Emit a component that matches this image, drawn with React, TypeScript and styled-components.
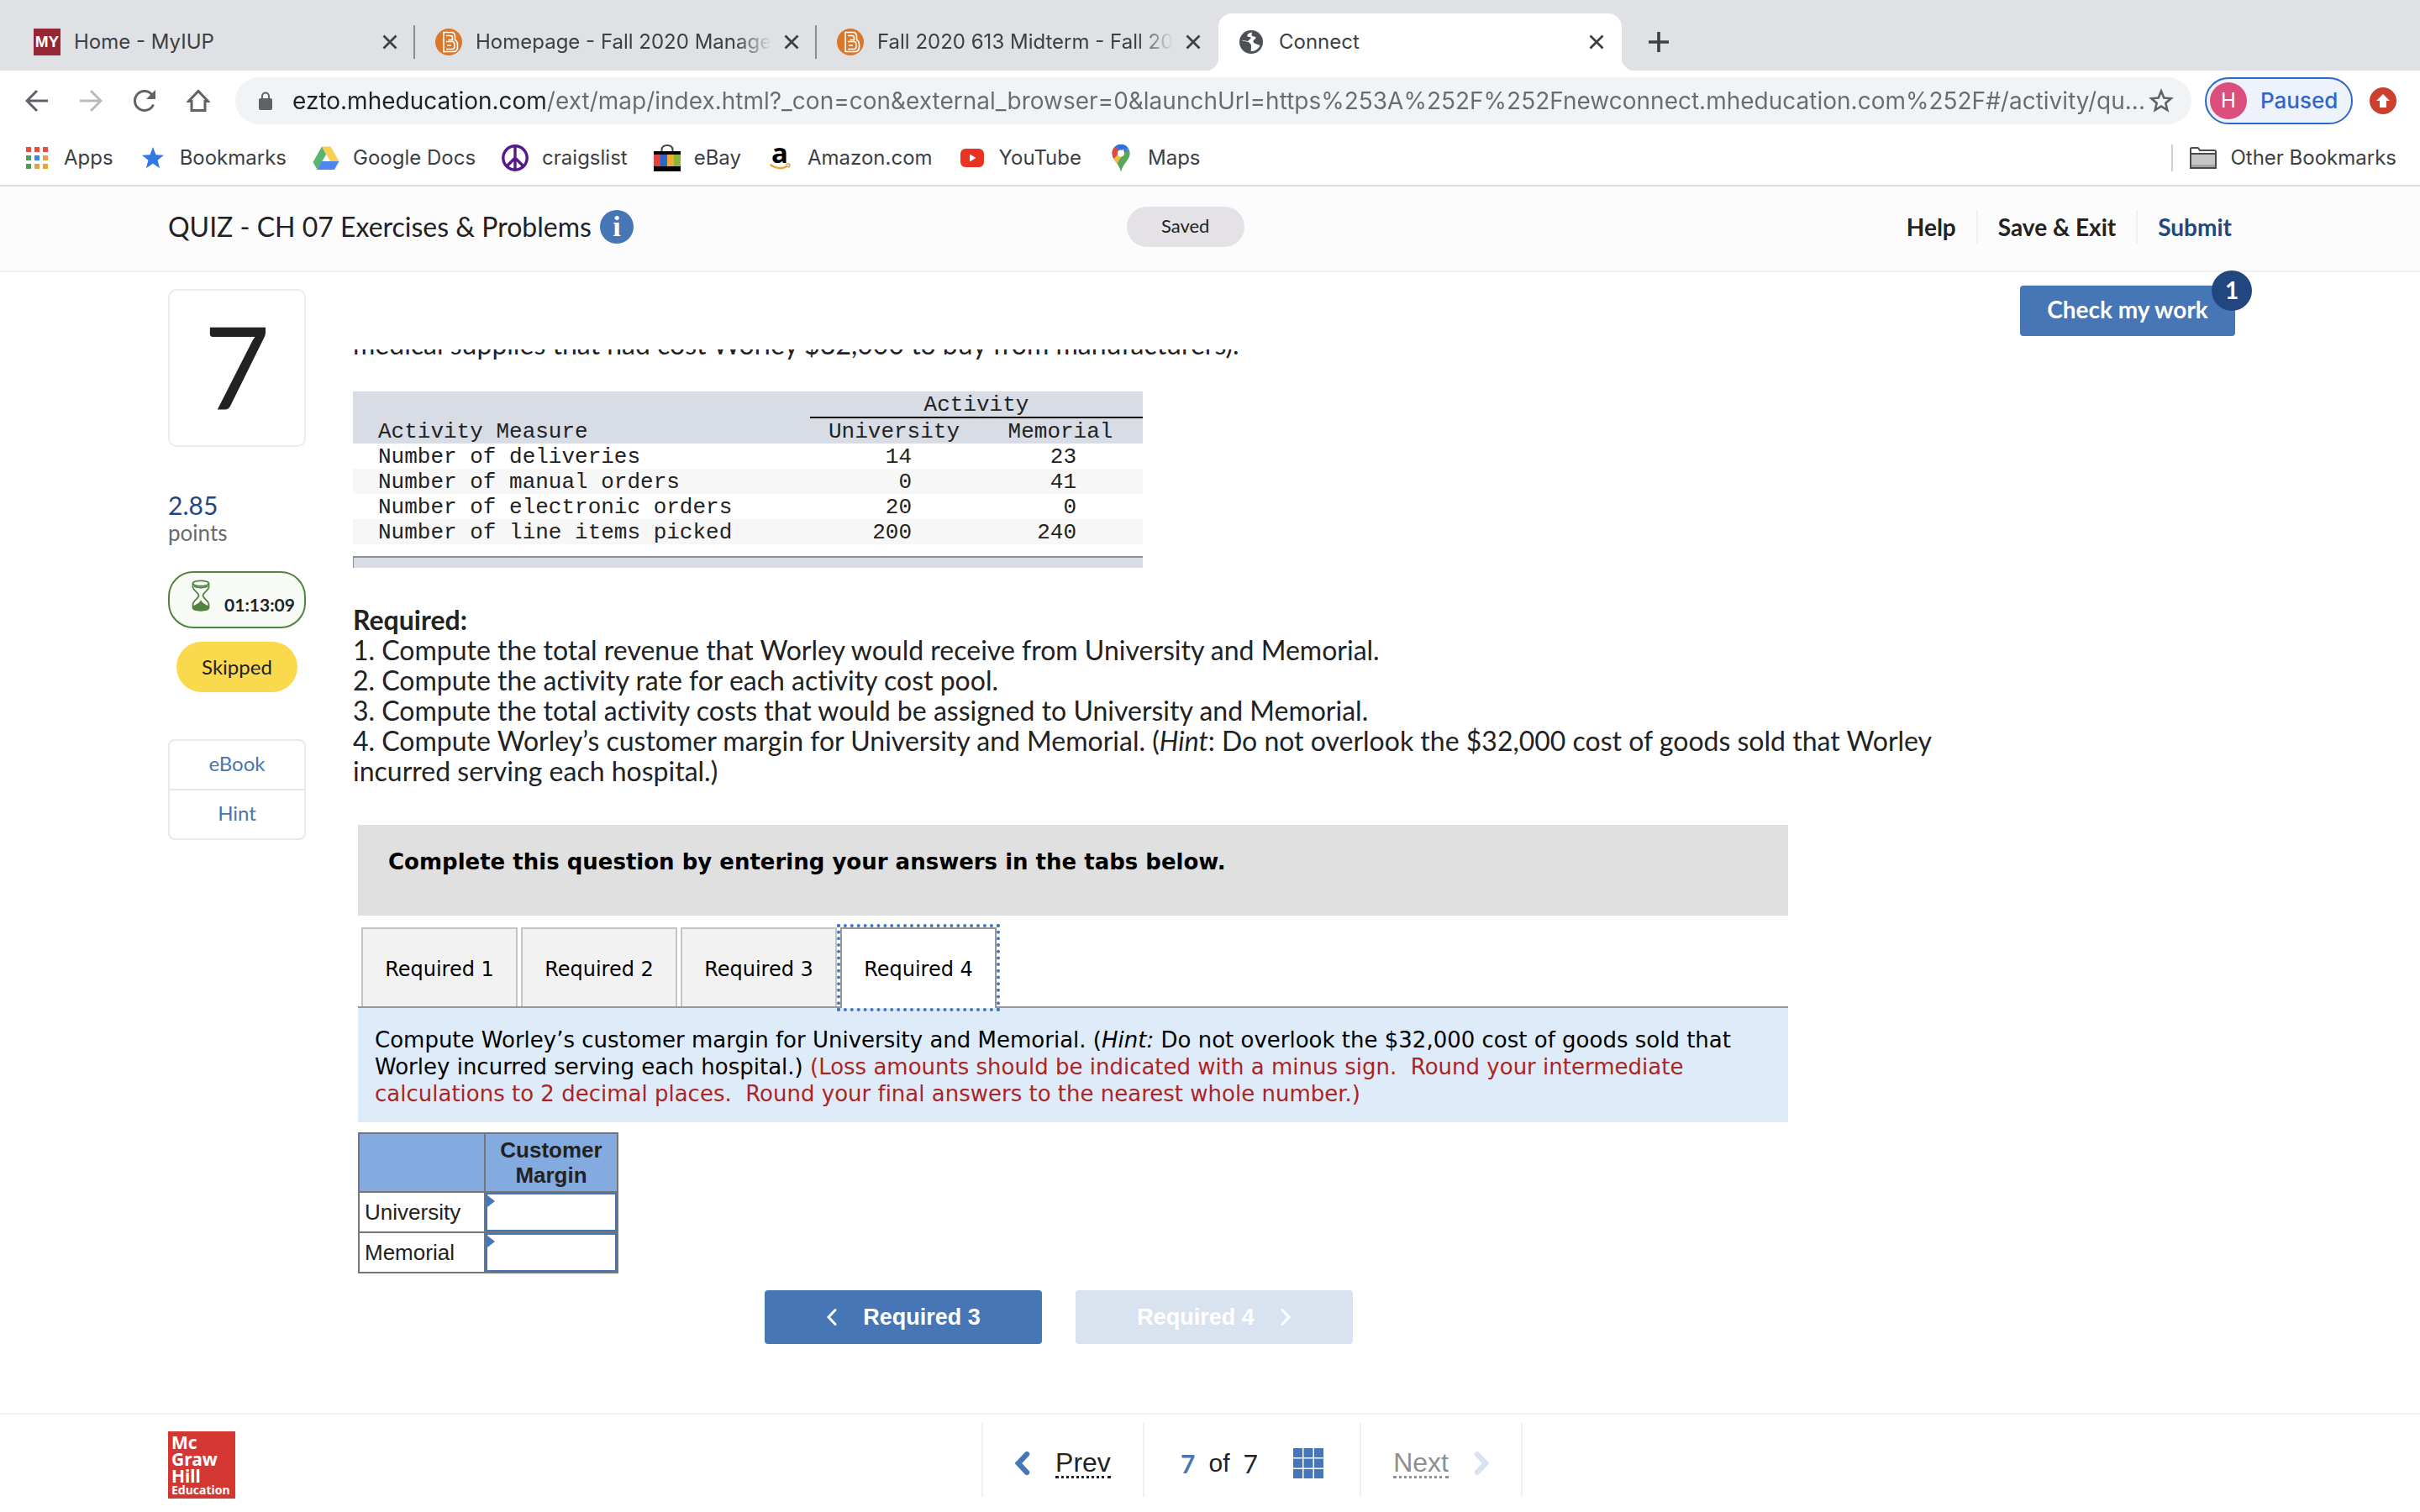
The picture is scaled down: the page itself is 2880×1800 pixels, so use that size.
import React from 'react';
import styled, { createGlobalStyle, css } from 'styled-components';

const ui = '"Inter", "Roboto", sans-serif';
const body = '"Lato", "Open Sans", sans-serif';
const arial = '"Liberation Sans", Arial, sans-serif';
const verdana = '"DejaVu Sans", Verdana, sans-serif';
const mono = '"Liberation Mono", "Courier New", monospace';

const blue = '#4676b5';
const navy = '#22477f';
const ink = '#222';
const chrome = '#dfe1e5';
const line = '#f0f0f0';

const GlobalStyle = createGlobalStyle`
  *, *::before, *::after { box-sizing: border-box; }
  body { margin: 0; background: #fff; color: ${ink}; font-family: ${body}; font-variant-ligatures: none; }
  button, input { font: inherit; color: inherit; margin: 0; padding: 0; border: 0; background: none; font-variant-ligatures: none; }
  button { cursor: pointer; }
  a { color: inherit; text-decoration: none; }
  p, h1, h2 { margin: 0; font-weight: 400; }
  svg { display: block; flex: none; }
`;

const Page = styled.div`
  min-height: 100vh;
  display: flex;
  flex-direction: column;
`;

/* ---------- browser chrome ---------- */

const TabStrip = styled.div`
  display: flex;
  align-items: flex-end;
  height: 84px;
  padding: 16px 0 0 16px;
  background: ${chrome};
  font: 400 24px/32px ${ui};
  color: #3c4043;
`;

const BrowserTab = styled.div<{ $active?: boolean; $divider?: boolean }>`
  position: relative;
  display: flex;
  align-items: center;
  width: 478px;
  height: 68px;
  padding: 0 16px 0 24px;
  ${p => p.$divider && css`
    &::after {
      content: '';
      position: absolute;
      right: 0;
      top: 14px;
      width: 2px;
      height: 40px;
      background: #8a8d91;
    }
  `}
  ${p => p.$active && css`
    width: 480px;
    background: #fff;
    border-radius: 16px 16px 0 0;
    &::before, &::after {
      content: '';
      position: absolute;
      bottom: 0;
      width: 16px;
      height: 16px;
    }
    &::before {
      left: -16px;
      background: radial-gradient(circle at 0 0, ${chrome} 16px, #fff 17px);
    }
    &::after {
      right: -16px;
      background: radial-gradient(circle at 100% 0, ${chrome} 16px, #fff 17px);
    }
  `}
`;

const TabTitle = styled.span<{ $fade?: boolean }>`
  flex: 1;
  min-width: 0;
  margin: 0 10px 0 16px;
  overflow: hidden;
  white-space: nowrap;
  ${p => p.$fade && css`mask-image: linear-gradient(to right, #000 88%, transparent);`}
`;

const MyBadge = styled.span`
  width: 32px;
  height: 32px;
  background: #952735;
  color: #fff;
  font: 700 19px/32px ${arial};
  text-align: center;
`;

const IconButton = styled.button`
  display: flex;
  align-items: center;
  justify-content: center;
  width: 28px;
  height: 32px;
`;

const NewTab = styled(IconButton)`
  width: 32px;
  margin: 0 0 18px 28px;
`;

const Toolbar = styled.div`
  display: flex;
  align-items: center;
  height: 72px;
  padding: 0 28px;
  font: 400 28px/56px ${ui};
  button { min-width: 32px; }
`;

const NavIcons = styled.div`
  display: flex;
  gap: 32px;
  margin-right: 28px;
`;

const AddressBar = styled.form`
  flex: 1;
  display: flex;
  align-items: center;
  height: 56px;
  padding: 0 20px 0 28px;
  border-radius: 28px;
  background: #f1f3f4;
`;

const AddressInput = styled.input`
  flex: 1;
  min-width: 0;
  height: 56px;
  margin-left: 24px;
  outline: none;
  color: transparent;
  background: linear-gradient(to right, #202124 302px, #696b6e 302px);
  background-clip: text;
  -webkit-background-clip: text;
`;

const Profile = styled.button`
  display: flex;
  align-items: center;
  gap: 16px;
  width: 176px;
  height: 56px;
  margin: 0 20px 0 16px;
  padding: 0 4px;
  border: 2px solid #2f66ca;
  border-radius: 28px;
  background: #edf2fb;
  color: #2f66ca;
  font-size: 26px;
  font-weight: 500;
`;

const Avatar = styled.span`
  width: 44px;
  height: 44px;
  border-radius: 50%;
  background: #dc4f7c;
  color: #fff;
  font: 400 24px/44px ${ui};
`;

const Bookmarks = styled.nav`
  display: flex;
  align-items: center;
  gap: 31px;
  height: 66px;
  padding: 0 28px;
  border-bottom: 2px solid #dadce0;
  font: 400 24px/32px ${ui};
  color: #3c4043;
  a { display: flex; align-items: center; gap: 16px; }
`;

const OtherBookmarks = styled.div`
  margin-left: auto;
  padding-left: 20px;
  border-left: 2px solid #d0d0d0;
`;

/* ---------- assignment header ---------- */

const Header = styled.header`
  display: grid;
  grid-template-columns: 33fr 140px 34fr;
  align-items: center;
  height: 102px;
  padding: 0 224px 4px 200px;
  border-bottom: 2px solid ${line};
  background: #fcfcfc;
`;

const Title = styled.h1`
  display: flex;
  align-items: center;
  gap: 10px;
  font-size: 32px;
  line-height: 40px;
`;

const InfoButton = styled.button`
  width: 40px;
  height: 40px;
  border-radius: 50%;
  background: ${blue};
  color: #fff;
  font: 700 34px/40px "Liberation Serif", serif;
`;

const Saved = styled.span`
  height: 48px;
  border-radius: 24px;
  background: #e4e2e6;
  font-size: 22px;
  line-height: 46px;
  text-align: center;
`;

const HeaderActions = styled.div`
  display: flex;
  justify-content: flex-end;
  font-size: 28px;
  font-weight: 700;
  line-height: 40px;
  button { padding: 0 24px; }
  button + button { border-left: 2px solid ${line}; }
  button:last-child { padding-right: 0; color: ${navy}; }
`;

/* ---------- layout ---------- */

const Layout = styled.main`
  flex: 1;
  display: grid;
  grid-template-columns: 164px 1fr;
  gap: 56px;
  padding: 0 220px 0 200px;
`;

const Sidebar = styled.aside`
  display: flex;
  flex-direction: column;
  padding-top: 20px;
`;

const QuestionNumber = styled.div`
  height: 188px;
  border: 2px solid #ececec;
  border-radius: 10px;
  font-size: 136px;
  line-height: 178px;
  text-align: center;
`;

const Points = styled.div`
  margin-top: 52px;
  font-size: 26px;
  line-height: 32px;
  color: #6b6b6b;
  strong { display: block; font-size: 30px; line-height: 34px; font-weight: 400; color: ${navy}; }
`;

const Timer = styled.div`
  display: flex;
  align-items: flex-end;
  justify-content: center;
  gap: 16px;
  height: 68px;
  margin-top: 30px;
  padding: 0 0 14px 14px;
  border: 2px solid #52833f;
  border-radius: 30px;
  background: #f7faf5;
  font-size: 21px;
  font-weight: 700;
  line-height: 24px;
  svg { margin-bottom: 4px; }
`;

const Skipped = styled.div`
  margin: 16px 10px 56px;
  border-radius: 30px;
  background: #fad94c;
  font-size: 24px;
  line-height: 60px;
  text-align: center;
`;

const Resources = styled.div`
  display: flex;
  flex-direction: column;
  height: 120px;
  border: 2px solid #e9e9e9;
  border-radius: 8px;
  color: ${blue};
  font-size: 24px;
  button { flex: 1; padding-bottom: 4px; }
  button + button { border-top: 2px solid #e9e9e9; }
`;

const Main = styled.div`
  min-width: 0;
`;

const ActionRow = styled.div`
  display: flex;
  justify-content: flex-end;
  padding: 16px 0;
`;

const CheckButton = styled.button`
  position: relative;
  width: 256px;
  height: 60px;
  padding-bottom: 4px;
  border-radius: 4px;
  background: ${blue};
  color: #fff;
  font-size: 28px;
  font-weight: 700;
`;

const Badge = styled.span`
  position: absolute;
  top: -18px;
  right: -20px;
  width: 48px;
  height: 48px;
  border-radius: 50%;
  background: ${navy};
  line-height: 46px;
`;

const Scroller = styled.section`
  overflow: hidden;
  font-size: 32px;
  line-height: 36px;
`;

const Intro = styled.p`
  margin: -24px 0 38px;
`;

/* ---------- activity table ---------- */

const ActivityTable = styled.table`
  width: 940px;
  table-layout: fixed;
  border-spacing: 0;
  font: 400 26px/28px ${mono};
  th { padding: 2px 0 0; font-weight: 400; background: #d8dce5; }
  td { padding: 2px 79px 0 0; text-align: right; }
  tbody th { padding-left: 30px; text-align: left; background: none; }
  tbody tr:nth-child(even) { background: #f7f7f7; }
`;

const MeasureHead = styled.th`
  && { padding-left: 30px; text-align: left; vertical-align: bottom; }
`;

const GroupHead = styled.th`
  border-bottom: 2px solid #000;
`;

const TableFoot = styled.div`
  width: 940px;
  height: 14px;
  margin: 14px 0 44px;
  border-top: 2px solid #8b8e94;
  border-left: 1px solid #8b8e94;
  background: #d8dce5;
`;

const Requirements = styled.div`
  max-width: 1900px;
  margin-bottom: 46px;
  h2 { font-size: 32px; font-weight: 700; }
`;

/* ---------- answer area ---------- */

const Answer = styled.div`
  width: 1702px;
  margin-left: 6px;
  font-family: ${verdana};
  color: #000;
`;

const Banner = styled.div`
  height: 108px;
  padding: 26px 36px;
  background: #e0e0e0;
  font-size: 26px;
  font-weight: 700;
  line-height: 36px;
`;

const AnswerTabs = styled.div`
  display: flex;
  gap: 4px;
  margin-top: 14px;
  padding: 0 4px;
  border-bottom: 2px solid #979797;
`;

const AnswerTab = styled.button<{ $active?: boolean }>`
  width: 186px;
  height: 94px;
  border: 2px solid #c4c4c4;
  border-bottom: 0;
  background: #f2f2f2;
  font-size: 24px;
  padding-top: 4px;
  ${p => p.$active && css`
    height: 96px;
    margin-bottom: -2px;
    padding-bottom: 2px;
    border-color: #979797;
    background: #fff;
    outline: 4px dotted ${blue};
  `}
`;

const Instructions = styled.p`
  height: 136px;
  padding: 22px 20px 18px;
  background: #deebf8;
  font-size: 26px;
  line-height: 32px;
  span { color: #ac2424; white-space: pre-wrap; }
`;

const AnswerTable = styled.table`
  margin: 12px 0 20px;
  border-collapse: collapse;
  color: ${ink};
  font: 400 26px/30px ${arial};
  th, td { border: 2px solid #757575; padding: 0; }
  thead td, thead th { height: 70px; background: #83abe0; }
  thead td { width: 150px; }
  thead th { width: 158px; font-weight: 700; }
  tbody th { height: 48px; padding-left: 6px; text-align: left; font-weight: 400; }
`;

const InputCell = styled.td`
  position: relative;
  height: 48px;
  &::before {
    content: '';
    position: absolute;
    left: 2px;
    top: 3px;
    border: 7px solid transparent;
    border-left: 9px solid ${blue};
    border-right: 0;
  }
  input {
    display: block;
    width: 100%;
    height: 46px;
    border: 2px solid ${blue};
    padding: 0 12px;
  }
`;

const StepButtons = styled.div`
  display: flex;
  justify-content: center;
  gap: 40px;
  padding-right: 34px;
`;

const StepButton = styled.button`
  display: flex;
  align-items: center;
  justify-content: center;
  gap: 30px;
  width: 330px;
  height: 64px;
  border-radius: 4px;
  background: ${blue};
  color: #fff;
  font: 700 27px/64px ${arial};
  &:disabled { background: #d9e3ef; color: #fff; }
`;

/* ---------- footer ---------- */

const Footer = styled.footer`
  display: grid;
  grid-template-columns: 1fr auto 1fr;
  align-items: start;
  height: 118px;
  padding: 0 100px 0 200px;
  border-top: 2px solid ${line};
`;

const Logo = styled.a`
  width: 80px;
  height: 80px;
  margin-top: 20px;
  padding: 3px 0 0 4px;
  background: #d43732;
  font: 700 21px/20px "Noto Sans", sans-serif;
  && { color: #fff; }
  span { display: block; }
  small { display: block; font-size: 14px; line-height: 14px; }
`;

const Pager = styled.nav`
  display: flex;
  height: 88px;
  margin-top: 10px;
  border-right: 2px solid ${line};
  font: 400 30px/36px ${body};
`;

const PagerCell = styled.div<{ $wide?: boolean }>`
  display: flex;
  align-items: center;
  justify-content: center;
  gap: 16px;
  width: ${p => (p.$wide ? 258 : 192)}px;
  padding-top: 8px;
  border-left: 2px solid ${line};
  em { font-style: normal; font-family: ${arial}; }
  b { color: ${blue}; }
`;

const ListButton = styled.button`
  margin-left: 26px;
`;

const PagerButton = styled.button`
  display: flex;
  align-items: center;
  gap: 30px;
  font: 400 32px/34px ${arial};
  span { border-bottom: 3px dotted currentColor; line-height: 32px; }
  &:disabled { color: #8f8f8f; }
`;

/* ---------- icons ---------- */

const Close = () => (
  <IconButton aria-label="Close tab">
    <svg width="18" height="18" viewBox="0 0 18 18" stroke="#3c4043" strokeWidth="2.8"><path d="M1.5 1.5l15 15M16.5 1.5l-15 15" /></svg>
  </IconButton>
);

const CourseIcon = () => (
  <svg width="32" height="32" viewBox="0 0 32 32">
    <circle cx="16" cy="16" r="16" fill="#d9782d" />
    <path d="M10 4.500h9q4.500 0 4.500 5v4q3 1.500 3 5.500v3q0 5.500-5.500 5.500H10z" fill="none" stroke="#fff" strokeWidth="1.600" />
    <path d="M13 8.500h5.500q2 0 2 2.500v2.500h-5M13 15.500h8q2 1 2 4v2q0 3-3 3h-7M14 20h5" fill="none" stroke="#fff" strokeWidth="1.600" />
  </svg>
);

const Globe = () => (
  <svg width="32" height="32" viewBox="0 0 32 32">
    <circle cx="15" cy="16" r="14" fill="#4d5156" />
    <path d="M16 4.500c-4 .5-6 2.500-5.500 5l4 1c1 2-2.500 2.500-3 4.500l-7-1c-.5 1 0 3 .5 4l6 1.500c2 1 3.500 1 4 3l-1 4.500c5 .5 10-2.500 11.500-7l-4-1.500c-2-1-4-1-4-3.500 0-2 3-2 3-4.500-1-1.500-4-.5-5-2.500z" fill="#fff" />
    <path d="M4 14.500l8 1.500 3 3.500-.5 8C8 27 3.500 22 4 14.500z" fill="#4d5156" />
  </svg>
);

const BackArrow = ({ flip, color }: { flip?: boolean; color: string }) => (
  <svg width="28" height="28" viewBox="0 0 28 28" fill="none" stroke={color} strokeWidth="3">
    <path d={flip ? 'M1 14h24M14 2l12 12-12 12' : 'M27 14H3M14 2L2 14l12 12'} />
  </svg>
);

const Reload = () => (
  <svg width="28" height="28" viewBox="0 0 28 28" fill="none" stroke="#5f6368" strokeWidth="3">
    <path d="M24.500 18.500A11.500 11.500 0 1 1 22.500 6.300L25 9" />
    <path d="M27 1v11H16z" fill="#5f6368" stroke="none" />
  </svg>
);

const Home = () => (
  <svg width="28" height="28" viewBox="0 0 28 28" fill="none" stroke="#5f6368" strokeWidth="3">
    <path d="M2.500 14.500L14 2.500l11.500 12H22V25.500H6V14.500z" />
  </svg>
);

const Lock = () => (
  <svg width="16" height="22" viewBox="0 0 16 22">
    <rect x="0" y="8" width="16" height="14" rx="2" fill="#5f6368" />
    <path d="M4 9V5.500a4 4 0 0 1 8 0V9" fill="none" stroke="#5f6368" strokeWidth="2" />
  </svg>
);

const StarOutline = () => (
  <svg width="30" height="30" viewBox="0 0 30 30" fill="none" stroke="#5f6368" strokeWidth="2.600">
    <path d="M15 3.500l3.300 8 8.400.7-6.400 5.500 2 8.300L15 21.600 7.700 26l2-8.300-6.400-5.500 8.400-.7z" />
  </svg>
);

const Update = () => (
  <svg width="32" height="32" viewBox="0 0 32 32">
    <circle cx="16" cy="16" r="16" fill="#ca3f2d" />
    <path d="M16 8l8 8h-4v8h-8v-8H8z" fill="#fff" />
  </svg>
);

const AppsGrid = () => {
  const colors = ['#e74c3f', '#e74c3f', '#e74c3f', '#4c9c57', '#3b84ee', '#e7a43a', '#4c9c57', '#e7a43a', '#e7a43a'];
  return (
    <svg width="32" height="32" viewBox="0 0 32 32">
      {colors.map((c, i) => <rect key={i} x={3 + (i % 3) * 10} y={3 + Math.floor(i / 3) * 10} width="6" height="6" fill={c} />)}
    </svg>
  );
};

const BlueStar = () => (
  <svg width="32" height="32" viewBox="0 0 32 32"><path d="M16 3l3.500 9.200 9.500.5-7.400 6.100 2.500 9.400L16 22.800l-8.100 5.400 2.500-9.400L3 12.700l9.500-.5z" fill="#3478e5" /></svg>
);

const Drive = () => (
  <svg width="32" height="32" viewBox="0 0 32 32">
    <path d="M11 2.500h10.500L31.500 20H21z" fill="#f8cf52" />
    <path d="M11 2.500l5.200 9.200L5.500 30 .5 21z" fill="#5bb46f" />
    <path d="M10.800 20h20.700L26 30H5.500z" fill="#4f86ec" />
  </svg>
);

const Peace = () => (
  <svg width="32" height="32" viewBox="0 0 32 32" fill="none" stroke="#55198b" strokeWidth="3.400">
    <circle cx="16" cy="16" r="14.200" />
    <path d="M16 2v28M16 16L6.500 25.500M16 16l9.500 9.500" />
  </svg>
);

const EbayBag = () => (
  <svg width="32" height="32" viewBox="0 0 32 32">
    <path d="M9.500 11V6.500q0-5.500 6.500-5.500t6.500 5.500V11" fill="none" stroke="#444" strokeWidth="2" />
    <rect y="8" width="32" height="24" fill="#000" />
    <rect y="12" width="8" height="14" fill="#dd4245" />
    <rect x="8" y="12" width="8" height="14" fill="#2b66cf" />
    <rect x="16" y="12" width="8" height="14" fill="#f0ac37" />
    <rect x="24" y="12" width="8" height="14" fill="#8eb535" />
  </svg>
);

const Amazon = () => (
  <svg width="32" height="32" viewBox="0 0 32 32">
    <text x="15" y="22" fontFamily="Open Sans" fontSize="33" fontWeight="700" textAnchor="middle" fill="#000">a</text>
    <path d="M3.500 24q11 7.500 21.500 1.500" fill="none" stroke="#f0a33a" strokeWidth="2.400" />
    <path d="M22 23.500q4-1 4.800 0 .5 1.500-1.300 4.500" fill="none" stroke="#f0a33a" strokeWidth="1.600" />
  </svg>
);

const YouTube = () => (
  <svg width="32" height="32" viewBox="0 0 32 32">
    <rect x="2" y="5" width="28" height="22" rx="6" fill="#eb3323" />
    <path d="M13 11.500v9l7.500-4.500z" fill="#fff" />
  </svg>
);

const MapPin = () => (
  <svg width="32" height="32" viewBox="0 0 32 32">
    <defs>
      <clipPath id="pin"><path d="M16 0C9.800 0 5.500 4.800 5.500 10.500c0 7.500 7.500 11 10.500 21.500 3-10.500 10.500-14 10.500-21.500C26.500 4.800 22.200 0 16 0z" /></clipPath>
    </defs>
    <g clipPath="url(#pin)">
      <rect width="32" height="32" fill="#5aa75a" />
      <path d="M4 0h28L8 24z" fill="#3b78e7" />
      <path d="M16 10L28-2H10z" fill="#2f6fdd" />
      <path d="M27 1l4 6-9 0z" fill="#5a94f2" />
      <path d="M4 4l5-1 8 7-9 11-5-6z" fill="#dd4b3e" />
      <path d="M6.500 18L19 5l2 9-11.500 11z" fill="#f3bc41" />
      <path d="M14 18l8-10h6v8L18 32h-6l-1-7z" fill="#5aa75a" />
    </g>
    <circle cx="16" cy="10.500" r="4" fill="#fff" />
  </svg>
);

const Folder = () => (
  <svg width="32" height="26" viewBox="0 0 32 26" stroke="#4a4a4a" strokeWidth="2">
    <path d="M1 25V2.500Q1 1 2.500 1H9q1.500 0 2 1.500l1 1.500h17.500Q31 4 31 5.500V25z" fill="#fff" />
    <path d="M1 8h30v17H1z" fill="#c6c6c6" />
    <path d="M2 22.500h28" stroke="#a4a4a4" strokeWidth="3" />
    <path d="M1 8h30v17H1z" fill="none" />
  </svg>
);

const Hourglass = () => (
  <svg width="24" height="38" viewBox="0 0 24 38" fill="none" stroke="#52833f" strokeWidth="1.800">
    <ellipse cx="12" cy="4.500" rx="9.500" ry="3.200" />
    <path d="M2.500 4.500v4c0 4.500 7 7 7 10.500s-7 6-7 10.500v4c0 4 19 4 19 0v-4c0-4.500-7-7-7-10.500s7-6 7-10.500v-4M4 8c4 2 12 2 16 0" />
    <path d="M3 32c3-1 7-2.500 9-6 2 3.500 6 5 9 6v1.500c0 4-18 4-18 0z" fill="#52833f" />
  </svg>
);

const Chevron = ({ right, color, width = 3, size = 22 }: { right?: boolean; color: string; width?: number; size?: number }) => (
  <svg width={size * 0.64} height={size} viewBox="0 0 14 22" fill="none" stroke={color} strokeWidth={width} strokeLinecap="round">
    <path d={right ? 'M3 2.500l8 8.500-8 8.500' : 'M11 2.500L3 11l8 8.500'} />
  </svg>
);

const GridIcon = () => (
  <svg width="36" height="36" viewBox="0 0 36 36" fill={blue}>
    {[0, 1, 2, 3, 4, 5, 6, 7, 8].map(i => <rect key={i} x={(i % 3) * 12.500} y={Math.floor(i / 3) * 12.500} width="11" height="11" />)}
  </svg>
);

/* ---------- data ---------- */

const bookmarks = [
  { label: 'Apps', icon: <AppsGrid /> },
  { label: 'Bookmarks', icon: <BlueStar /> },
  { label: 'Google Docs', icon: <Drive /> },
  { label: 'craigslist', icon: <Peace /> },
  { label: 'eBay', icon: <EbayBag /> },
  { label: 'Amazon.com', icon: <Amazon /> },
  { label: 'YouTube', icon: <YouTube /> },
  { label: 'Maps', icon: <MapPin /> },
];

const measures: [string, number, number][] = [
  ['Number of deliveries', 14, 23],
  ['Number of manual orders', 0, 41],
  ['Number of electronic orders', 20, 0],
  ['Number of line items picked', 200, 240],
];

const address =
  'ezto.mheducation.com/ext/map/index.html?_con=con&external_browser=0&launchUrl=https%253A%252F%252Fnewconnect.mheducation.com%252F#/activity/qu...';

export default function App() {
  return (
    <Page>
      <GlobalStyle />
      <TabStrip>
        <BrowserTab $divider><MyBadge>MY</MyBadge><TabTitle>Home - MyIUP</TabTitle><Close /></BrowserTab>
        <BrowserTab $divider><CourseIcon /><TabTitle $fade>Homepage - Fall 2020 Manage</TabTitle><Close /></BrowserTab>
        <BrowserTab><CourseIcon /><TabTitle $fade>Fall 2020 613 Midterm - Fall 20</TabTitle><Close /></BrowserTab>
        <BrowserTab $active><Globe /><TabTitle>Connect</TabTitle><Close /></BrowserTab>
        <NewTab aria-label="New tab">
          <svg width="24" height="24" viewBox="0 0 24 24" stroke="#3c4043" strokeWidth="3.600"><path d="M12 0v24M0 12h24" /></svg>
        </NewTab>
      </TabStrip>
      <Toolbar>
        <NavIcons>
          <IconButton aria-label="Back"><BackArrow color="#5f6368" /></IconButton>
          <IconButton aria-label="Forward"><BackArrow flip color="#bababa" /></IconButton>
          <IconButton aria-label="Reload"><Reload /></IconButton>
          <IconButton aria-label="Home"><Home /></IconButton>
        </NavIcons>
        <AddressBar>
          <Lock />
          <AddressInput aria-label="Address" defaultValue={address} />
          <IconButton type="button" aria-label="Bookmark this page"><StarOutline /></IconButton>
        </AddressBar>
        <Profile><Avatar>H</Avatar>Paused</Profile>
        <IconButton aria-label="Update"><Update /></IconButton>
      </Toolbar>
      <Bookmarks>
        {bookmarks.map(b => <a href="#" key={b.label}>{b.icon}{b.label}</a>)}
        <OtherBookmarks><a href="#"><Folder />Other Bookmarks</a></OtherBookmarks>
      </Bookmarks>

      <Header>
        <Title>QUIZ - CH 07 Exercises &amp; Problems <InfoButton>i</InfoButton></Title>
        <Saved>Saved</Saved>
        <HeaderActions>
          <button>Help</button>
          <button>Save &amp; Exit</button>
          <button>Submit</button>
        </HeaderActions>
      </Header>

      <Layout>
        <Sidebar>
          <QuestionNumber>7</QuestionNumber>
          <Points><strong>2.85</strong>points</Points>
          <Timer><Hourglass />01:13:09</Timer>
          <Skipped>Skipped</Skipped>
          <Resources><button>eBook</button><button>Hint</button></Resources>
        </Sidebar>
        <Main>
          <ActionRow><CheckButton>Check my work<Badge>1</Badge></CheckButton></ActionRow>
          <Scroller>
            <Intro>medical supplies that had cost Worley $32,000 to buy from manufacturers).</Intro>
            <ActivityTable>
              <colgroup><col width="544" /><col width="200" /><col width="196" /></colgroup>
              <thead>
                <tr><MeasureHead rowSpan={2}>Activity Measure</MeasureHead><GroupHead colSpan={2}>Activity</GroupHead></tr>
                <tr><th>University</th><th>Memorial</th></tr>
              </thead>
              <tbody>
                {measures.map(([name, u, m]) => <tr key={name}><th>{name}</th><td>{u}</td><td>{m}</td></tr>)}
              </tbody>
            </ActivityTable>
            <TableFoot />
            <Requirements>
              <h2>Required:</h2>
              <p>1. Compute the total revenue that Worley would receive from University and Memorial.</p>
              <p>2. Compute the activity rate for each activity cost pool.</p>
              <p>3. Compute the total activity costs that would be assigned to University and Memorial.</p>
              <p>4. Compute Worley’s customer margin for University and Memorial. (<i>Hint</i>: Do not overlook the $32,000 cost of goods sold that Worley incurred serving each hospital.)</p>
            </Requirements>
            <Answer>
              <Banner>Complete this question by entering your answers in the tabs below.</Banner>
              <AnswerTabs role="tablist">
                <AnswerTab role="tab">Required 1</AnswerTab>
                <AnswerTab role="tab">Required 2</AnswerTab>
                <AnswerTab role="tab">Required 3</AnswerTab>
                <AnswerTab role="tab" aria-selected $active>Required 4</AnswerTab>
              </AnswerTabs>
              <Instructions>
                Compute Worley’s customer margin for University and Memorial. (<i>Hint:</i> Do not overlook the $32,000 cost of goods sold that Worley incurred serving each hospital.) <span>(Loss amounts should be indicated with a minus sign.  Round your intermediate calculations to 2 decimal places.  Round your final answers to the nearest whole number.)</span>
              </Instructions>
              <AnswerTable>
                <thead><tr><td /><th>Customer Margin</th></tr></thead>
                <tbody>
                  <tr><th><label htmlFor="university">University</label></th><InputCell><input id="university" /></InputCell></tr>
                  <tr><th><label htmlFor="memorial">Memorial</label></th><InputCell><input id="memorial" /></InputCell></tr>
                </tbody>
              </AnswerTable>
              <StepButtons>
                <StepButton><Chevron color="#fff" />Required 3</StepButton>
                <StepButton disabled>Required 4<Chevron right color="#fff" /></StepButton>
              </StepButtons>
            </Answer>
          </Scroller>
        </Main>
      </Layout>

      <Footer>
        <Logo href="#"><span>Mc</span><span>Graw</span><span>Hill</span><small>Education</small></Logo>
        <Pager>
          <PagerCell><PagerButton><Chevron color={blue} width={5} size={28} /><span>Prev</span></PagerButton></PagerCell>
          <PagerCell $wide><b>7</b><em>of</em>7<ListButton aria-label="Question list"><GridIcon /></ListButton></PagerCell>
          <PagerCell><PagerButton disabled><span>Next</span><Chevron right color="#d9e3ef" width={5} size={28} /></PagerButton></PagerCell>
        </Pager>
      </Footer>
    </Page>
  );
}
